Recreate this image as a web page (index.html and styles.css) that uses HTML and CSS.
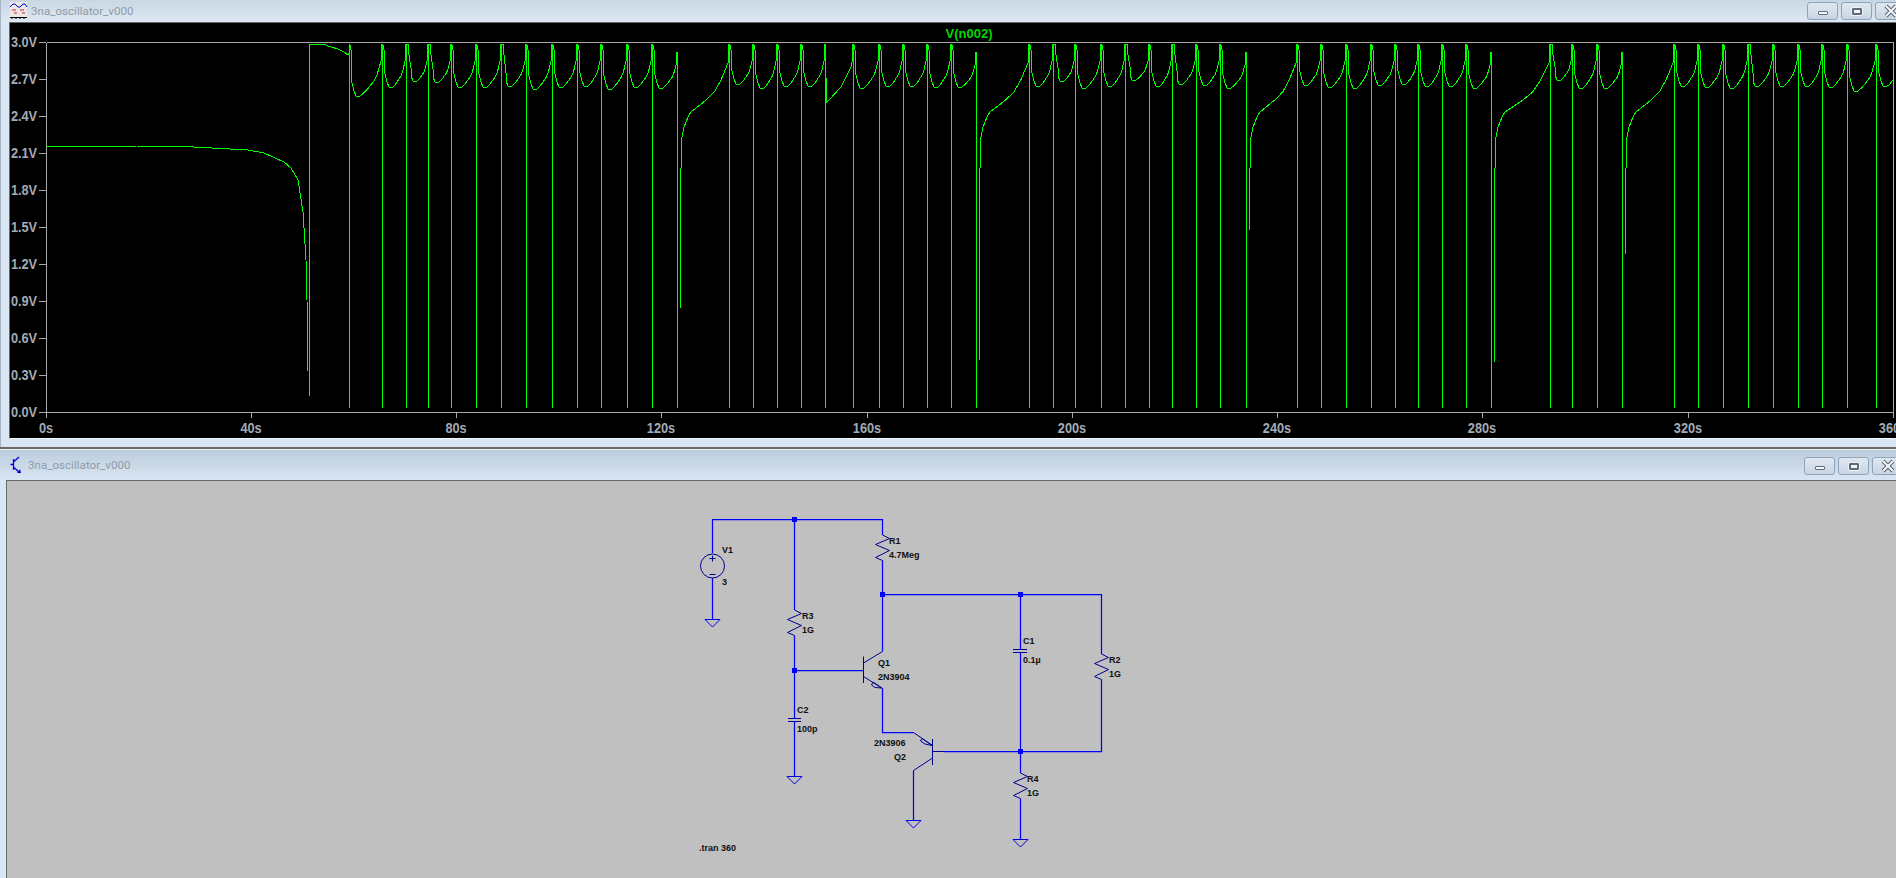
FILE: index.html
```html
<!DOCTYPE html>
<html lang="en">
<head>
<meta charset="utf-8">
<title>3na_oscillator_v000</title>
<link rel="stylesheet" href="styles.css">
</head>
<body>
<div class="desktop">
  <section class="window window-plot">
    <header class="titlebar titlebar-plot">
      <svg class="app-icon" width="18" height="18" viewBox="0 0 18 18">
        <rect x="0" y="0" width="17" height="16" fill="#e8e8e8"/>
        <path class="ico-wave" d="M0 5 L3 2 L5 2 L8 5 L10 5 L13 2 L15 2 L17 5"/>
        <path class="ico-red" d="M2 8H6M10 8H14M4 11H7M12 11H15"/>
        <path class="ico-axis" d="M0 15.5H17M2 15V17M6 15V17M10 15V17M14 15V17"/>
      </svg>
      <span class="title-text">3na_oscillator_v000</span>
      <div class="buttons">
        <div class="btn"><span class="glyph-min"></span></div>
        <div class="btn"><span class="glyph-max"></span></div>
        <div class="btn"><svg width="16" height="14" viewBox="0 0 16 14"><path class="close-out" d="M3 2L13 12M13 2L3 12"/><path class="close-in" d="M3 2L13 12M13 2L3 12"/></svg></div>
      </div>
    </header>
    <div class="plot-frame">
      <svg class="plot" width="1887" height="415" viewBox="9 23 1887 415">
        <g class="axis">
          <path d="M45.5 42.5H1892.5V418M45.5 42.5V418M45.5 412.5H1892.5"/>
          <path d="M38 42.5H45M38 79.5H45M38 116.5H45M38 153.5H45M38 190.5H45M38 227.5H45M38 264.5H45M38 301.5H45M38 338.5H45M38 375.5H45M38 412.5H45"/>
          <path d="M250.5 412V418M455.5 412V418M660.5 412V418M866.5 412V418M1071.5 412V418M1276.5 412V418M1481.5 412V418M1687.5 412V418"/>
        </g>
        <path id="trace" class="trace" d=""/>
        <g class="tick-y">
          <text x="36" y="47">3.0V</text><text x="36" y="84">2.7V</text><text x="36" y="121">2.4V</text>
          <text x="36" y="158">2.1V</text><text x="36" y="195">1.8V</text><text x="36" y="232">1.5V</text>
          <text x="36" y="269">1.2V</text><text x="36" y="306">0.9V</text><text x="36" y="343">0.6V</text>
          <text x="36" y="380">0.3V</text><text x="36" y="417">0.0V</text>
        </g>
        <g class="tick-x">
          <text x="45" y="433">0s</text><text x="250" y="433">40s</text><text x="455" y="433">80s</text>
          <text x="660" y="433">120s</text><text x="866" y="433">160s</text><text x="1071" y="433">200s</text>
          <text x="1276" y="433">240s</text><text x="1481" y="433">280s</text><text x="1687" y="433">320s</text>
          <text x="1892" y="433">360s</text>
        </g>
        <text class="trace-name" x="968" y="38">V(n002)</text>
      </svg>
    </div>
  </section>
  <div class="separator"></div>
  <section class="window window-schem">
    <header class="titlebar titlebar-schem">
      <svg class="app-icon" width="13" height="18" viewBox="0 0 13 18">
        <path class="ico-q" d="M0.5 8.5H3.5M3.5 3V14M3.5 6L9 1M3.5 11L10 17"/>
        <path class="ico-qa" d="M7 17L11 17L10 13Z"/>
      </svg>
      <span class="title-text">3na_oscillator_v000</span>
      <div class="buttons buttons-schem">
        <div class="btn"><span class="glyph-min"></span></div>
        <div class="btn"><span class="glyph-max"></span></div>
        <div class="btn"><svg width="16" height="14" viewBox="0 0 16 14"><path class="close-out" d="M3 2L13 12M13 2L3 12"/><path class="close-in" d="M3 2L13 12M13 2L3 12"/></svg></div>
      </div>
    </header>
    <div class="schem-frame">
      <svg class="schem" width="1889" height="397" viewBox="7 481 1889 397">
        <g class="wire">
          <path d="M712.5 553V519.5H882.5V535M712.5 578V619"/>
          <path d="M794.5 519.5V610M794.5 635.5V718M794.5 721.5V776M794.5 670.5H863"/>
          <path d="M882.5 560.5V651.5M882.5 688.5V732.5H913.5M882.5 594.5H1101.5V654M1101.5 679.5V751.5H944"/>
          <path d="M1020.5 594.5V649M1020.5 652.5V773M1020.5 798.5V839M913.5 770.5V820"/>
        </g>
        <g class="sym">
          <circle cx="712.5" cy="566" r="12"/>
          <path d="M709.5 558.5H715.5M712.5 555.5V561.5M709.5 574.5H715.5"/>
          <path d="M882.5 535L889.5 538.5L875.5 544.5L889.5 550.5L875.5 557.5L882.5 560.5"/>
          <path d="M794.5 610L801.5 613.5L787.5 619.5L801.5 625.5L787.5 632.5L794.5 635.5"/>
          <path d="M1101.5 654L1108.5 657.5L1094.5 663.5L1108.5 669.5L1094.5 676.5L1101.5 679.5"/>
          <path d="M1020.5 773L1027.5 776.5L1013.5 782.5L1027.5 788.5L1013.5 795.5L1020.5 798.5"/>
          <path d="M1013 649.5H1027M1013 652.5H1027"/>
          <path d="M788 718.5H801M788 721.5H801"/>
          <path d="M863.5 656.5V683M863.5 663L882.5 651.5M863.5 676.5L882.5 688.5M873 682L882 688L875 687.5L871.5 685Z"/>
          <path d="M932.5 739V765M932.5 751.5H944M913.5 732.5L932.5 745.5M922 738.5L932 745.5L925 744L920.5 741Z"/>
          <path d="M932.5 758L913.5 770.5"/>
        </g>
        <g class="gnd">
          <path d="M705 619.5H720L712.5 627Z"/>
          <path d="M787 776.5H802L794.5 784Z"/>
          <path d="M906 820.5H921L913.5 828Z"/>
          <path d="M1013 839.5H1028L1020.5 847Z"/>
        </g>
        <g class="node">
          <rect x="792" y="517" width="5" height="5"/>
          <rect x="880" y="592" width="5" height="5"/>
          <rect x="792" y="668" width="5" height="5"/>
          <rect x="1018" y="592" width="5" height="5"/>
          <rect x="1018" y="749" width="5" height="5"/>
        </g>
        <g class="lbl">
          <text x="722" y="553">V1</text><text x="722" y="585">3</text>
          <text x="889" y="544">R1</text><text x="889" y="558">4.7Meg</text>
          <text x="802" y="619">R3</text><text x="802" y="633">1G</text>
          <text x="878" y="666">Q1</text><text x="878" y="680">2N3904</text>
          <text x="797" y="713">C2</text><text x="797" y="732">100p</text>
          <text x="874" y="746">2N3906</text><text x="894" y="760">Q2</text>
          <text x="699" y="851">.tran 360</text>
          <text x="1023" y="644">C1</text><text x="1023" y="663">0.1µ</text>
          <text x="1109" y="663">R2</text><text x="1109" y="677">1G</text>
          <text x="1027" y="782">R4</text><text x="1027" y="796">1G</text>
        </g>
      </svg>
    </div>
  </section>
</div>
<script src="plot.js"></script>
</body>
</html>
```

FILE: styles.css
```css
html, body { margin: 0; padding: 0; height: 100%; overflow: hidden; }
.desktop {
  width: 1896px; height: 878px; overflow: hidden;
  display: flex; flex-direction: column;
  background: #d9e6f4;
}
.window-plot { height: 447px; flex: none; border-left: 1px solid #a9b5c2; box-sizing: border-box; }
.separator {
  flex: none; height: 3px; box-sizing: border-box;
  background: #6e6a62; border-bottom: 1px solid #e6eef6;
}
.window-schem { flex: 1; display: flex; flex-direction: column; min-height: 0; }

.titlebar {
  display: flex; align-items: center; flex: none; overflow: hidden;
}
.titlebar-plot {
  height: 22px; padding-left: 9px;
  background: linear-gradient(#c9d7e4, #dde8f4);
}
.titlebar-schem {
  height: 30px; padding-left: 10px;
  background: linear-gradient(#bccddc, #d9e5f2);
}
.app-icon { flex: none; margin-right: 3px; }
.titlebar-schem .app-icon { margin-right: 5px; }
.title-text {
  font-family: Roboto, sans-serif; font-size: 11.6px; color: #8f9aa6;
  white-space: nowrap;
}
.buttons { margin-left: auto; display: flex; gap: 3px; margin-right: -10px; }
.buttons-schem { margin-right: -7px; padding-top: 2px; }
.btn {
  width: 31px; height: 18px; box-sizing: border-box; flex: none;
  border: 1px solid #90a4b9; border-radius: 3px;
  background: linear-gradient(#dfe8f1, #c7d5e3);
  display: flex; align-items: center; justify-content: center;
}
.glyph-min {
  display: block; width: 8px; height: 2px; margin-top: 3px;
  background: #f4f6f8; border: 1px solid #5f6b78; border-radius: 1px;
}
.glyph-max {
  display: block; width: 6px; height: 3px;
  background: #f4f6f8; border: 2px solid #5f6b78; border-radius: 1px;
  outline: 1px solid #eef2f6;
}
.close-out { fill: none; stroke: #55606c; stroke-width: 4; }
.close-in { fill: none; stroke: #f6f8fa; stroke-width: 2; }
.ico-wave { fill: none; stroke: #0000d0; stroke-width: 1; }
.ico-red { fill: none; stroke: #d02020; stroke-width: 1; }
.ico-axis { fill: none; stroke: #000; stroke-width: 1; }
.ico-q { fill: none; stroke: #0000e0; stroke-width: 1.3; }
.ico-qa { fill: #0000e0; }

.plot-frame {
  margin-left: 8px; box-sizing: border-box;
  height: 417px; border-top: 1px solid #6a6a6a; border-left: 1px solid #6a6a6a;
  border-bottom: 1px solid #f6f9fc;
  background: #000; overflow: hidden;
}
.plot { display: block; }
.axis path { fill: none; stroke: #a8a8a8; stroke-width: 1; shape-rendering: crispEdges; }
.trace { fill: none; stroke: #00ff00; stroke-width: 1; shape-rendering: crispEdges; stroke-linejoin: bevel; }
.tick-y text, .tick-x text {
  font-family: "Liberation Sans", sans-serif;
  font-size: 15px; font-weight: 700; fill: #a2abb6;
  transform-box: fill-box; transform: scaleX(0.85);
}
.tick-y text { text-anchor: end; transform-origin: right center; }
.tick-x text { text-anchor: middle; transform-origin: center center; }
.trace-name {
  font-family: "Liberation Sans", sans-serif; font-size: 13px; font-weight: 700;
  fill: #00d800; text-anchor: middle;
}

.schem-frame {
  flex: 1; margin-left: 6px; min-height: 0;
  border-top: 1px solid #6a6a6a; border-left: 1px solid #6a6a6a;
  background: #c0c0c0; overflow: hidden;
}
.schem { display: block; }
.wire path { fill: none; stroke: #0000ff; stroke-width: 1.25; }
.sym path, .sym circle { fill: none; stroke: #000090; stroke-width: 1; }
.gnd path { fill: none; stroke: #0000e0; stroke-width: 1; }
.node rect { fill: #0000ff; }
.lbl text {
  font-family: "Liberation Sans", sans-serif; font-size: 9px; font-weight: 700; fill: #101010;
}
```

FILE: plot.js
```js
// Transient trace of V(n002), in screen pixels.
(function () {
  var B = 408, T = 44, d = [];
  function M(x, y) { d.push('M' + x + ' ' + y); }
  function L(x, y) { d.push('L' + x.toFixed(1) + ' ' + y.toFixed(1)); }
  var FLAT = { 405: 1, 427: 1, 500: 1, 1052: 1, 1124: 1, 1171: 1, 1549: 1, 1747: 1 };

  function fall(x0, min) {
    if (FLAT[x0]) { L(x0 + 2, T); L(x0 + 3, 55); L(x0 + 5, min - 14); }
    else { L(x0 + 1, T + 1); L(x0 + 1, 48); L(x0 + 2, 50); L(x0 + 2, 63); L(x0 + 3, min - 14); }
    L(x0 + 5, min - 6); L(x0 + 7, min - 1); L(x0 + 9, min); L(x0 + 11, min - 1);
  }
  function cycle(x0, min, x1) {
    fall(x0, min);
    var a = x0 + 11, b = x1 - 1, t = [.2, .36, .52, .68, .82, 1], f = [.1, .2, .32, .44, .62, 1];
    for (var i = 0; i < t.length; i++) L(a + (b - a) * t[i], min - 1 - (min - 62) * f[i]);
    L(x1 - 1, 52); L(x1, T); L(x1, B); L(x1, T);
  }
  function cycleEnd(x0, min, x1, bottom, nextX) {
    fall(x0, min);
    var a = x0 + 11, b = x1 - 1, t = [.2, .36, .52, .68, .82, 1], f = [.1, .2, .32, .44, .62, 1];
    for (var i = 0; i < t.length; i++) L(a + (b - a) * t[i], min - 1 - (min - 66) * f[i]);
    L(x1 - 1, 58); L(x1, 52); L(x1, B);
    var D = x1 + 3;
    M(D, bottom); L(D, 168); L(D + 1, 168); L(D + 1, 147); L(D + 2, 137); L(D + 4, 127); L(D + 8, 117); L(D + 11, 112);
    var s = D + 11, e = nextX - 1;
    L(s + (e - s) * .41, 100); L(s + (e - s) * .63, 92); L(s + (e - s) * .81, 80); L(e, 63);
    L(nextX, T); L(nextX, B); L(nextX, T);
  }

  // Settling section before the first pulse.
  M(45, 147);
  [[47, 146], [135, 146], [193, 147], [247, 150], [263, 153], [283, 162], [290, 168], [297, 180], [302, 212], [305, 260], [306, 300], [307, 371]]
    .forEach(function (p) { L(p[0], p[1]); });
  M(308, 396); L(308, 44); L(322, 44); L(330, 47); L(337, 49); L(343, 52); L(347, 55); L(348, 53); L(348, T); L(348, B); L(348, T);

  var groups = [
    { s: [[348, 97], [381, 88], [405, 82], [427, 83], [450, 88], [475, 88], [500, 87], [525, 90], [551, 88], [576, 87], [600, 90], [626, 88], [651, 89]], end: 676, bottom: 308, next: 728 },
    { s: [[728, 85], [752, 89], [776, 87], [800, 87]], special: 824 },
    { s: [[852, 89], [878, 87], [902, 87], [926, 88], [950, 88]], end: 975, bottom: 360, next: 1028 },
    { s: [[1028, 87], [1052, 82], [1074, 89], [1100, 87], [1124, 81], [1148, 87], [1171, 85], [1195, 86], [1219, 89]], end: 1245, bottom: 230, next: 1296 },
    { s: [[1296, 86], [1320, 88], [1345, 89], [1370, 86], [1394, 85], [1417, 87], [1441, 87], [1465, 89]], end: 1490, bottom: 362, next: 1549 },
    { s: [[1549, 81], [1571, 89], [1596, 89]], end: 1621, bottom: 254, next: 1673 },
    { s: [[1673, 87], [1697, 88], [1722, 89], [1747, 87], [1772, 87], [1797, 87], [1821, 88], [1846, 92]], end: 1875 }
  ];

  groups.forEach(function (g) {
    g.s.forEach(function (p, i) {
      var nx = i + 1 < g.s.length ? g.s[i + 1][0] : null;
      if (nx !== null) { cycle(p[0], p[1], nx); return; }
      if (g.special) {
        cycle(p[0], p[1], g.special);
        L(g.special, 78); L(g.special + 1, 78); L(g.special + 1, 103); L(828, 100); L(840, 87); L(850, 67); L(851, 62); L(851, 52); L(852, T); L(852, B); L(852, T);
      } else if (g.next) {
        cycleEnd(p[0], p[1], g.end, g.bottom, g.next);
      } else {
        cycle(p[0], p[1], g.end);
        fall(g.end, 87);
        L(1888, 85); L(1892, 80);
      }
    });
  });
  document.getElementById('trace').setAttribute('d', d.join(''));
})();
```
